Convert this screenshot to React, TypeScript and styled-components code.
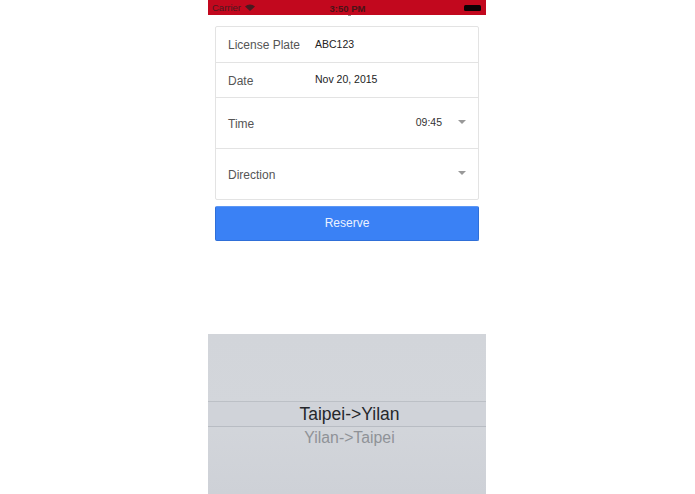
import React from 'react'
import styled, { createGlobalStyle } from 'styled-components'

const GlobalStyle = createGlobalStyle`
  html, body {
    margin: 0;
    padding: 0;
    background: #fff;
  }
  body {
    font-family: "Liberation Sans", Arial, sans-serif;
  }
`

const Phone = styled.div`
  position: relative;
  width: 278px;
  height: 494px;
  margin-left: 208px;
  display: flex;
  flex-direction: column;
  overflow: hidden;
`

const StatusBar = styled.div`
  height: 15px;
  flex: none;
  background: #c2081e;
  color: #4a1a20;
  display: grid;
  grid-template-columns: 1fr auto 1fr;
  align-items: center;
  padding: 0 4px 0 4px;
  box-sizing: border-box;
`

const Carrier = styled.div`
  display: flex;
  align-items: center;
  gap: 4px;
  font-size: 9.5px;
`

const Clock = styled.div`
  font-size: 9.5px;
  font-weight: 700;
  padding: 1px 0 0 1px;
  color: #4a1418;
`

const Battery = styled.div`
  justify-self: end;
  width: 17px;
  height: 6px;
  background: #0c0205;
  border-radius: 1.5px;
  margin-right: 1px;
`

// bit of the scrolled title sticking out under the status bar
const TitleTail = styled.div`
  position: absolute;
  top: 15px;
  left: 140px;
  width: 3px;
  height: 1px;
  background: #999;
`

const Content = styled.div`
  padding: 11px 7px 0 7px;
  flex: 1;
`

const Card = styled.div`
  border: 1px solid #e3e3e3;
  border-radius: 2px;
  background: #fff;
`

const Row = styled.div<{ $height: number }>`
  height: ${p => p.$height}px;
  display: flex;
  align-items: center;
  padding: 0 12px;
  box-sizing: border-box;
  border-bottom: 1px solid #e3e3e3;

  &:last-child {
    border-bottom: none;
  }
`

const Label = styled.div`
  width: 87px;
  flex: none;
  padding-top: 1px;
  font-size: 12px;
  color: #555;
`

const Value = styled.div`
  font-size: 10.5px;
  color: #222;
  margin-top: -2px;
`

const TimeValue = styled(Value)`
  margin-left: auto;
  color: #333;
`

const Caret = styled.div<{ $auto?: boolean }>`
  width: 0;
  height: 0;
  border-left: 4.5px solid transparent;
  border-right: 4.5px solid transparent;
  border-top: 4.5px solid #999;
  margin-left: ${p => (p.$auto ? 'auto' : '16px')};
  margin-right: 0;
  margin-top: -3px;
`

const ReserveButton = styled.button`
  display: block;
  width: 100%;
  height: 35px;
  margin-top: 6px;
  background: #3a81f5;
  border: 1px solid #2f6fd8;
  border-top-color: #5c97f5;
  border-radius: 2px;
  color: #eaf2ff;
  font-family: inherit;
  font-size: 12px;
  padding: 0 0 1px;
`

const Picker = styled.div`
  height: 160px;
  flex: none;
  background: linear-gradient(#d2d5da, #d3d6db 50%, #ced1d7);
  padding-top: 67px;
  box-sizing: border-box;
  text-align: center;
`

const SelectedOption = styled.div`
  height: 26px;
  line-height: 25px;
  box-sizing: border-box;
  padding-left: 5px;
  border-top: 1px solid #bcc0c6;
  border-bottom: 1px solid #b8bcc3;
  background: #d0d3d9;
  color: #25272b;
  font-size: 17.5px;
`

const Option = styled.div`
  height: 22px;
  line-height: 21px;
  padding-left: 5px;
  color: #8f9297;
  font-size: 15.8px;
`

const App: React.FC = () => {
  return (
    <Phone>
      <GlobalStyle />
      <StatusBar>
        <Carrier>
          Carrier
          <svg width="10" height="7" viewBox="0 0 10 7">
            <path d="M5 7 L0 2.4 A7.2 7.2 0 0 1 10 2.4 Z" fill="#4a1a20" />
          </svg>
        </Carrier>
        <Clock>3:50 PM</Clock>
        <Battery />
      </StatusBar>
      <TitleTail />
      <Content>
        <Card>
          <Row $height={36}>
            <Label>License Plate</Label>
            <Value>ABC123</Value>
          </Row>
          <Row $height={35}>
            <Label>Date</Label>
            <Value>Nov 20, 2015</Value>
          </Row>
          <Row $height={51}>
            <Label>Time</Label>
            <TimeValue>09:45</TimeValue>
            <Caret />
          </Row>
          <Row $height={50}>
            <Label>Direction</Label>
            <Caret $auto />
          </Row>
        </Card>
        <ReserveButton>Reserve</ReserveButton>
      </Content>
      <Picker>
        <SelectedOption>Taipei-&gt;Yilan</SelectedOption>
        <Option>Yilan-&gt;Taipei</Option>
      </Picker>
    </Phone>
  )
}

export default App
